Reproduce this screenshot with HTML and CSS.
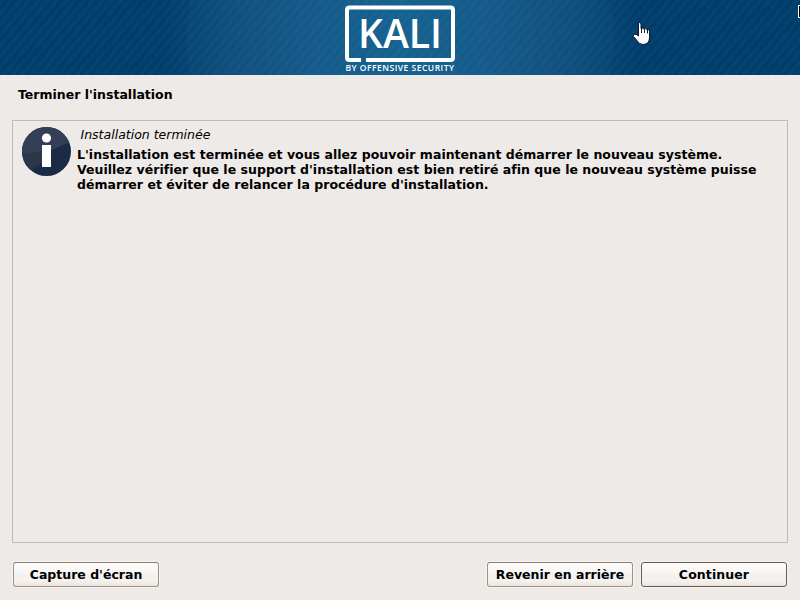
FILE: index.html
```html
<!DOCTYPE html>
<html lang="fr">
<head>
<meta charset="utf-8">
<title>Terminer l'installation</title>
<link rel="stylesheet" href="styles.css">
</head>
<body>
<header class="banner">
  <svg class="logo" width="120" height="75" viewBox="340 0 120 75">
    <path d="M361 60H349.500Q347 60 347 57.500V10Q347 7.500 349.500 7.500H450.500Q453 7.500 453 10V57.500Q453 60 450.500 60H366" fill="none" stroke="#fff" stroke-width="4"/>
    <text class="logo-name" x="358" y="48" textLength="84" lengthAdjust="spacingAndGlyphs">KALI</text>
    <text class="logo-by" x="345.500" y="71" textLength="109" lengthAdjust="spacingAndGlyphs">BY OFFENSIVE SECURITY</text>
  </svg>
  <svg class="pointer" width="20" height="26" viewBox="0 0 20 26">
    <path d="M6.500 15V3Q6.500 1.500 7.500 1.500T9 3V7.500Q11 6.500 12 8Q14 7 15 8.500Q17 8 17.500 10V17Q17 23.500 11 23.500Q7 23.500 5 19.500L1.500 15.500Q.8 13.500 3 13.200Q5 13.500 6.500 15Z" fill="#fff" stroke="#10172a"/>
    <path d="M9.500 7V12M12.500 8V12M15.500 8.500V12.500" stroke="#10172a"/>
  </svg>
  <span class="caret"></span>
</header>
<main class="page">
  <h1 class="title">Terminer l'installation</h1>
  <section class="panel">
    <svg class="info" width="50" height="50" viewBox="0 0 50 50">
      <defs><clipPath id="disc"><circle cx="24.500" cy="24.500" r="24.500"/></clipPath></defs>
      <g clip-path="url(#disc)">
        <path d="M0 0H50V50H0Z" fill="#1b2a45"/>
        <path d="M0 0H50V14L25 25L0 28Z" fill="#333f56"/>
        <path d="M0 27L25 23V33L7 44L0 50Z" fill="#2b3648"/>
      </g>
      <circle cx="24.500" cy="11" r="4.600" fill="#fff"/>
      <path d="M20 18H29V40H20Z" fill="#fff"/>
    </svg>
    <div class="message">
      <p class="caption">Installation terminée</p>
      <p class="body">L'installation est terminée et vous allez pouvoir maintenant démarrer le nouveau système.<br>Veuillez vérifier que le support d'installation est bien retiré afin que le nouveau système puisse<br>démarrer et éviter de relancer la procédure d'installation.</p>
    </div>
  </section>
  <footer class="actions">
    <button class="btn">Capture d'écran</button>
    <span class="space"></span>
    <button class="btn">Revenir en arrière</button>
    <button class="btn primary">Continuer</button>
  </footer>
</main>
</body>
</html>
```

FILE: styles.css
```css
* { box-sizing: border-box; }

body {
  margin: 0;
  width: 800px;
  height: 600px;
  overflow: hidden;
  display: flex;
  flex-direction: column;
  background: #eeeae7;
  color: #000;
  font-family: "DejaVu Sans", sans-serif;
  font-size: 12.5px;
}

.banner {
  position: relative;
  height: 75px;
  flex: none;
  display: flex;
  justify-content: center;
  background:
    repeating-linear-gradient(130deg, rgba(130, 180, 200, 0.04) 0 3px, transparent 4px 7px),
    radial-gradient(circle 214px at 400px 38px, rgba(40, 120, 150, 0.06) 99%, transparent),
    radial-gradient(circle 135px at 400px 38px, rgba(10, 110, 140, 0.06) 99%, transparent),
    linear-gradient(90deg, #003d6b 160px, #104d7d 240px, #145688 310px, #146091 400px, #145688 490px, #104d7d 560px, #003d6b 640px);
}

.logo-name {
  fill: #fff;
  font: 600 39.500px "Open Sans", sans-serif;
}

.logo-by {
  fill: #fff;
  font: 600 8.8px "Open Sans", sans-serif;
  letter-spacing: 0.5px;
}

.pointer {
  position: absolute;
  left: 632px;
  top: 21px;
}

.caret {
  position: absolute;
  left: 798px;
  top: 5px;
  width: 4px;
  height: 13px;
  background: #000;
  border: 1px solid #fff;
}

.page {
  flex: 1;
  display: flex;
  flex-direction: column;
  padding: 12px;
}

.title {
  margin: 0 0 18px 6px;
  font-size: 12.5px;
  line-height: 15px;
}

.panel {
  height: 423px;
  display: flex;
  border: 1px solid #c4bbab;
  padding: 6px 8px 6px 9px;
}

.info { flex: none; }

.message { padding-left: 5px; }

.caption {
  margin: 0 0 5px 3.5px;
  line-height: 15px;
  font-style: italic;
}

.body {
  margin: 0;
  font-weight: bold;
  line-height: 15px;
  letter-spacing: 0.025px;
  white-space: nowrap;
}

.actions {
  display: flex;
  gap: 8px;
  margin-top: 19px;
  padding: 0 1px;
}

.space { flex: 1; }

.btn {
  width: 146px;
  height: 25px;
  padding: 0;
  border: 1px solid #a19180;
  border-top-color: #87796b;
  border-radius: 3px;
  background: linear-gradient(#fefcfb, #f8f6f5 45%, #f2f2f2 50%, #f5f2ef 75%, #ece5df);
  box-shadow: 0 0 0 1px rgba(255, 250, 247, 0.6);
  color: #000;
  font: bold 12.5px/15px "DejaVu Sans", sans-serif;
  white-space: nowrap;
}

.primary {
  border-color: #655950;
  letter-spacing: 0.1px;
}
```
